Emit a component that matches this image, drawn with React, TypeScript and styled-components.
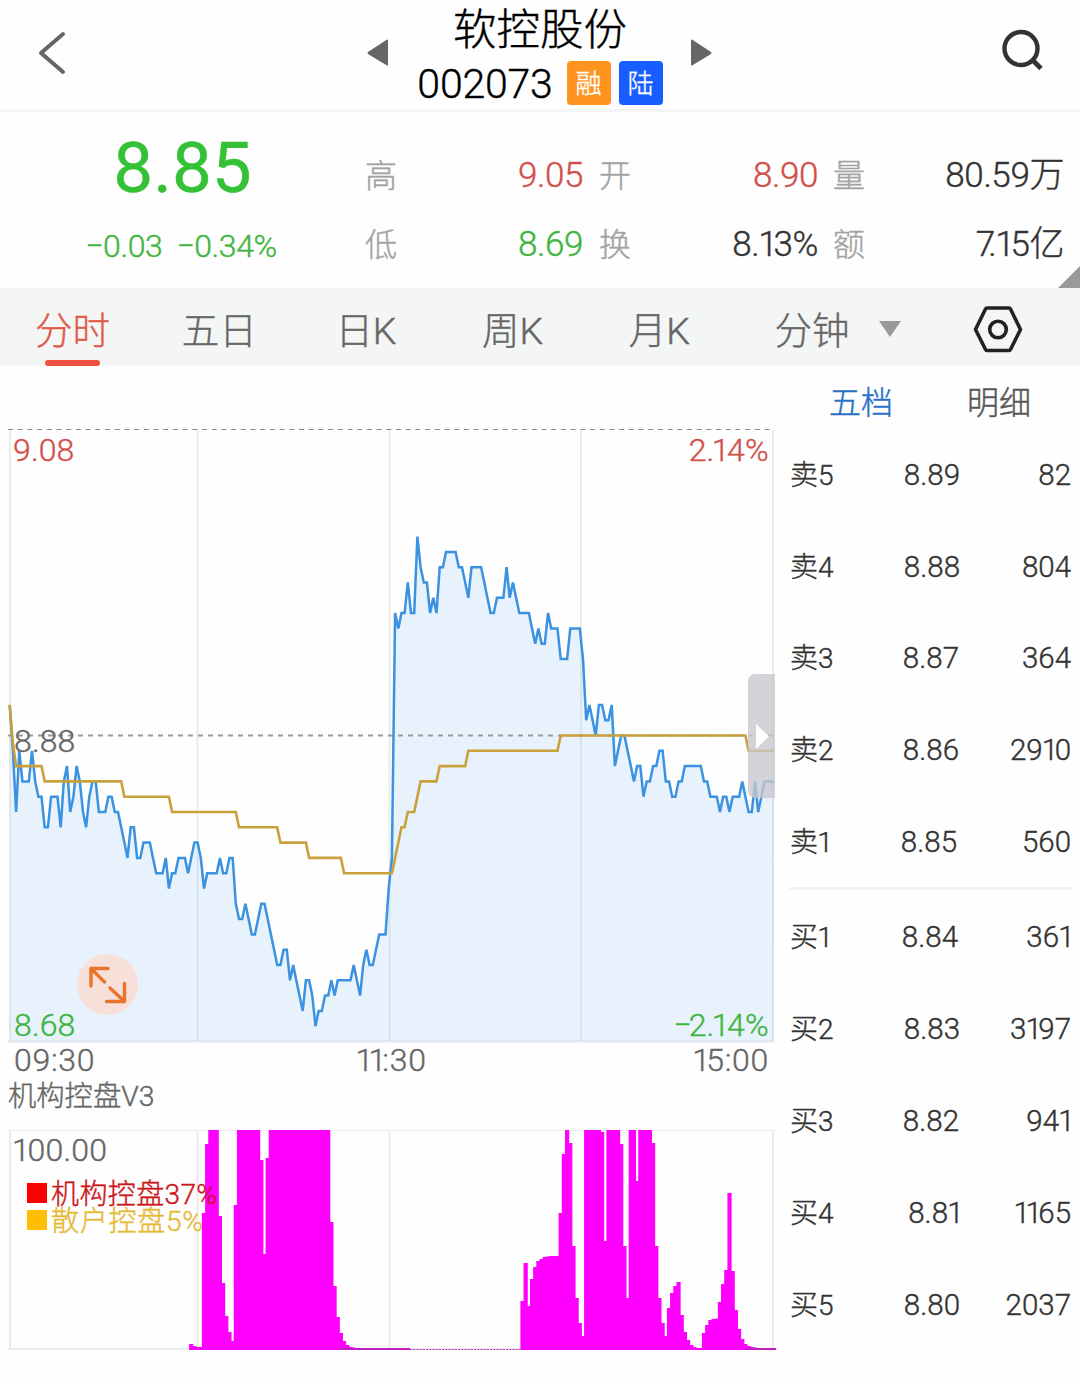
import React from 'react';
import styled, { createGlobalStyle } from 'styled-components';

const FONT = `Roboto, "Noto Sans CJK SC", sans-serif`;
const RED = '#d24f4a';
const GREEN = '#3fb53f';
const DARK = '#333';

const GlobalStyle = createGlobalStyle`
  * { box-sizing: border-box; }
  body {
    margin: 0;
    background: #fefefe;
    font-family: ${FONT};
    font-weight: 300;
    -webkit-text-stroke-width: 0.4px;
  }
`;

const Screen = styled.div`
  width: 1080px;
  height: 1380px;
  display: flex;
  flex-direction: column;
  overflow: hidden;
  background: #fefefe;
`;

/* ---------- header ---------- */

const Header = styled.header`
  height: 112px;
  flex: none;
  display: grid;
  grid-template-columns: 366px 348px 1fr;
  border-bottom: 3px solid #f3f5f6;
`;

const HeaderSide = styled.div<{ $end?: boolean }>`
  display: flex;
  align-items: flex-start;
  justify-content: ${p => (p.$end ? 'flex-end' : 'flex-start')};
  padding: ${p => (p.$end ? '28px 35px 0 0' : '30px 0 0 36px')};
`;

const TitleArea = styled.div`
  display: flex;
  justify-content: space-between;
  align-items: flex-start;
`;

const Arrow = styled.svg`
  display: block;
  flex: none;
  margin-top: 38px;
`;

const TitleText = styled.div`
  display: flex;
  flex-direction: column;
  align-items: center;
`;

const StockName = styled.div`
  height: 56px;
  font-size: 43.5px;
  line-height: 61px;
  color: #000;
`;

const CodeRow = styled.div`
  display: flex;
  align-items: center;
  height: 54px;
`;

const StockCode = styled.span`
  height: 54px;
  font-size: 41px;
  line-height: 56px;
  letter-spacing: -0.2px;
  color: #000;
`;

const Badge = styled.span<{ $color: string; $gap: number }>`
  width: 44px;
  height: 44px;
  margin-left: ${p => p.$gap}px;
  border-radius: 4px;
  background: ${p => p.$color};
  color: #fff;
  font-size: 26px;
  line-height: 47px;
  text-align: center;
`;

/* ---------- quote ---------- */

const Quote = styled.section`
  position: relative;
  height: 176px;
  flex: none;
  display: grid;
  grid-template-columns: 365px 1fr;
`;

const Current = styled.div`
  display: flex;
  flex-direction: column;
  align-items: center;
  padding-top: 21px;
  color: ${GREEN};
`;

const Price = styled.div`
  font-size: 71px;
  line-height: 70px;
  font-weight: 400;
  color: #35c135;
`;

const Changes = styled.div`
  display: flex;
  gap: 14px;
  margin: 23px 3px 0 0;
  font-size: 32px;
  line-height: 40px;
  letter-spacing: -0.4px;
`;

const Stats = styled.div`
  display: grid;
  grid-template-columns: 218px 16px 219px 15px 231px;
  grid-template-rows: 69px 69px;
  padding-top: 29px;
`;

const Stat = styled.div<{ $col: number }>`
  grid-column: ${p => p.$col};
  display: flex;
  align-items: center;
  justify-content: space-between;
`;

const StatLabel = styled.span`
  font-size: 32px;
  line-height: 40px;
  color: #a3a3a3;
`;

const StatValue = styled.span<{ $color: string }>`
  font-size: 35px;
  line-height: 40px;
  letter-spacing: -0.4px;
  color: ${p => p.$color};
`;

const Corner = styled.svg`
  position: absolute;
  right: 0;
  bottom: 0;
`;

/* figures with narrow sides, set close to their neighbours */
const Tight = styled.span<{ $seven?: boolean }>`
  margin-left: ${p => (p.$seven ? 0 : '-0.03em')};
  letter-spacing: ${p => (p.$seven ? '-0.2em' : '-0.12em')};
`;

const Digits = ({ children }: { children: string }) => (
  <>
    {children.split(/(1|7(?=\.))/).filter(Boolean).map((part, i) =>
      part === '1' || part === '7' ? <Tight key={i} $seven={part === '7'}>{part}</Tight> : part,
    )}
  </>
);

/* ---------- tabs ---------- */

const Tabs = styled.nav`
  height: 78px;
  flex: none;
  display: grid;
  grid-template-columns: repeat(5, 146.7px) 183.5px 163px;
  background: #f4f6f6;
`;

const Tab = styled.div<{ $active?: boolean }>`
  display: flex;
  flex-direction: column;
  align-items: center;
  font-size: 37.5px;
  line-height: 40px;
  color: ${p => (p.$active ? '#e05a4a' : '#666')};
  padding-right: 1.5px;
`;

const TabLabel = styled.span`
  margin-top: 23px;
  height: 49px;
  white-space: nowrap;
`;

const Underline = styled.span`
  width: 55px;
  height: 6px;
  border-radius: 3px;
  background: #f1503f;
`;

const MenuTab = styled.div`
  display: flex;
  align-items: flex-start;
  gap: 30px;
  padding-left: 41px;
  font-size: 37.5px;
  line-height: 40px;
  color: #666;
  svg { margin-top: 33px; }
`;

const Settings = styled.div`
  display: flex;
  padding: 17px 0 0 56px;
`;

/* ---------- body ---------- */

const Body = styled.main`
  flex: 1;
  display: grid;
  grid-template-columns: 780px 300px;
`;

const Charts = styled.div`
  position: relative;
  display: flex;
  flex-direction: column;
`;

const Plot = styled.svg`
  display: block;
  flex: none;
  text { stroke-width: 0.4px; }
`;

const TimeAxis = styled.div`
  height: 32px;
  display: grid;
  grid-template-columns: 1fr auto 1fr;
  padding: 0 11px 0 14px;
  font-size: 32px;
  line-height: 33px;
  letter-spacing: 0.7px;
  color: #666;
`;

const TimeLabel = styled.div`
  &:last-child { text-align: right; }
`;

const Caption = styled.div`
  height: 38px;
  padding-left: 8px;
  font-size: 28.3px;
  line-height: 41px;
  color: #666;
`;

const ExpandButton = styled.div`
  position: absolute;
  left: 77px;
  top: 588px;
  width: 61px;
  height: 61px;
  border-radius: 50%;
  background: rgba(253, 217, 206, 0.75);
`;

const DrawerHandle = styled.div`
  position: absolute;
  left: 748px;
  top: 308px;
  width: 27px;
  height: 124px;
  border-radius: 7px 0 0 7px;
  background: rgba(200, 199, 205, 0.78);
  svg { display: block; margin: 50px 0 0 8px; }
`;

const Book = styled.aside`
  display: flex;
  flex-direction: column;
  color: ${DARK};
`;

const BookTabs = styled.div`
  display: flex;
  height: 63px;
  padding: 17px 0 0 49px;
  gap: 74px;
  font-size: 32px;
  line-height: 40px;
`;

const BookTab = styled.span<{ $active?: boolean }>`
  color: ${p => (p.$active ? '#2870c8' : '#555')};
`;

const BookRow = styled.div`
  height: 91.8px;
  display: grid;
  grid-template-columns: 70px 100px 1fr;
  padding: 0 9px 0 10px;
  align-items: center;
  font-size: 29.5px;
  line-height: 40px;
`;

const Level = styled.span`
  padding-top: 2px;
  font-size: 28px;
`;

const Num = styled.span<{ $shift?: number }>`
  text-align: right;
  padding-right: ${p => p.$shift || 0}px;
`;

const BookDivider = styled.div`
  height: 3px;
  margin: -1px 8px 1.5px 9px;
  background: #f2f2f3;
`;

/* ---------- chart data: one value per trading minute ---------- */

// cents below the previous close (8.88)
const prices = [
  -2, 1, 5, 1, 3, 3, 3, 1, 3, 4, 4, 6, 6, 4, 4, 4, 6, 3, 2, 5, 4, 2, 3, 5, 6, 4, 3, 3, 5, 5,
  5, 4, 4, 5, 5, 6, 7, 8, 6, 6, 8, 8, 7, 7, 7, 8, 9, 9, 9, 8, 10, 9, 9, 8, 8, 8, 9, 8, 7, 7,
  8, 10, 9, 9, 9, 9, 8, 9, 9, 8, 8, 11, 12, 12, 11, 12, 13, 13, 12, 11, 11, 12, 13, 14, 15, 15, 14, 14, 16, 15,
  16, 17, 18, 16, 16, 17, 19, 18, 18, 17, 17, 16, 17, 16, 16, 16, 16, 16, 15, 16, 17, 15, 14, 15, 15, 14, 13, 13, 13, 10,
  8, -8, -7, -8, -8, -10, -8, -8, -13, -11, -10, -10, -8, -9, -8, -11, -11, -12, -12, -12, -12, -11, -11, -10, -9, -11, -11, -11, -11, -10,
  -9, -8, -8, -9, -9, -9, -11, -9, -10, -9, -8, -8, -8, -8, -7, -6, -7, -6, -6, -8, -7, -7, -7, -5, -5, -5, -7, -7, -7, -7,
  -5, -1, -2, -1, 0, -2, -2, -1, -1, -2, 2, 1, 0, 0, 1, 2, 3, 2, 2, 4, 3, 3, 2, 2, 1, 1, 3, 3, 4, 4,
  3, 3, 2, 2, 2, 2, 2, 2, 3, 3, 4, 4, 4, 5, 4, 4, 5, 4, 4, 4, 3, 4, 5, 5, 3, 5, 4, 3, 3, 3, 3,
];

const average: [number, number][] = [
  [0, -2], [1, 0.5], [2, 2], [10, 2], [11, 3], [35, 3], [36, 4], [50, 4], [51, 5], [71, 5], [72, 6],
  [84, 6], [85, 7], [93, 7], [94, 8], [104, 8], [105, 9], [120, 9], [123, 6], [124, 6], [125, 5],
  [127, 5], [129, 3], [134, 3], [135, 2], [143, 2], [144, 1], [172, 1], [173, 0], [231, 0], [232, 1], [240, 1],
];

// [first minute, bar heights...]
const F = 220;
const runs: number[][] = [
  [57, 6, 4, 3, 3, 137, 206, F, F, F, 134, 67, 34, 18, 9, 145, F, F, F, F, F, F, F, 190, 96, 192],
  [82, ...Array(19).fill(F), 128, 64, 33, 17, 9, 5, 3, 2.5, ...Array(17).fill(2)],
  [161, 49, 87, 44, 71, 83, 89, 91, 93, 93.5, 94, 94, 94, 137, 196, F, 207, 104, 52, 27, 14],
  [181, F, F, F, F, F, 218, 109, F, F, F, F, 206, 104, 52, F, F, 169, F, F, F, F, 207, 104, 52, 27, 14],
  [207, 42, 57, 64, 68, 35, 18, 10, 5, 3, 2, 2, 17, 25, 30, 31, 31.5, 48, 66, 80, 157, 79, 40, 21, 11, 6, 4, 3, 2.5, 2, 2, 2, 2, 2, 2],
];

const px = (i: number) => 9.7 + 3.185 * i;
const py = (k: number) => 369.5 + 15.3 * k;
const pricePoints = prices.map((k, i) => `${px(i).toFixed(1)},${py(k).toFixed(1)}`).join(' ');
const averagePoints = average.map(([i, k]) => `${px(i).toFixed(1)},${py(k).toFixed(1)}`).join(' ');

type LabelProps = { x: number; y: number; fill: string; text: string; end?: boolean };

const AxisLabel = ({ x, y, fill, text, end }: LabelProps) => {
  const dx = [...text]
    .map((c, i) => {
      const previous = text[i - 1];
      return (i && c === '1' ? -2.5 : 0.1) + (previous === '1' ? -2.5 : 0) + (previous === '−' ? -3 : 0);
    })
    .join(' ');
  return (
    <text x={x} y={y} dx={dx} fill={fill} stroke={fill} textAnchor={end ? 'end' : 'start'}>{text}</text>
  );
};

const PriceChart = () => (
  <Plot width="780" height="678" fontFamily={FONT} fontSize="32" fill="none">
    <g stroke="#ececec" strokeWidth="2">
      <path d="M10 64V675M197.5 64V675M389.5 64V675M581 64V675M773 64V675" />
      <path d="M8 675.5H774" stroke="#e3e6ec" />
    </g>
    <path d="M8 63.5H774" stroke="#8a8a8a" strokeWidth="1" strokeDasharray="5 4.7" />
    <polygon points={`9.7,675 ${pricePoints} 774,675`} fill="rgba(50,140,250,0.105)" />
    <path d="M8 369.5H774" stroke="#9b9b9b" strokeWidth="1.9" strokeDasharray="5 5" />
    <polyline points={pricePoints} stroke="#3a92e0" strokeWidth="2.5" />
    <AxisLabel x={14} y={385.5} fill="#666" text="8.88" />
    <polyline points={averagePoints} stroke="#c9a13c" strokeWidth="2.6" />
    <AxisLabel x={13} y={94.5} fill={RED} text="9.08" />
    <AxisLabel x={768.5} y={94.5} fill={RED} text="2.14%" end />
    <AxisLabel x={14} y={670} fill={GREEN} text="8.68" />
    <AxisLabel x={768.5} y={670} fill={GREEN} text="−2.14%" end />
  </Plot>
);

const ControlChart = () => (
  <Plot width="780" height="240" fontFamily={FONT} fill="none">
    <g stroke="#ececec" strokeWidth="2">
      <path d="M8 16.5H775" strokeWidth="1" />
      <path d="M10 16V235M197.5 16V235M389.5 16V235M773 16V235M8 235H775" />
    </g>
    <path d="M410 235.5H520" stroke="#b02bb0" strokeWidth="1" strokeDasharray="2 1.2" />
    <g fill="#ff00ff">
      {runs.flatMap(([start, ...values]) =>
        values.map((v, n) => (
          <rect key={start + n} x={px(start + n) - 2.1} y={236 - v} width="4.2" height={v} />
        )),
      )}
    </g>
    <path d="M340 235H410M745 235H775" stroke="#c01fc0" strokeWidth="2" />
    <g fontSize="32" letterSpacing="0.1"><AxisLabel x={12} y={46.5} fill="#666" text="100.00" /></g>
    <rect x="27" y="69" width="20" height="20" fill="#f00" />
    <rect x="27" y="96" width="20" height="20" fill="#ffbf00" />
    <text x="51" y="90" fontSize="28" fill="#cc1518" stroke="#cc1518" textLength="166">机构控盘37%</text>
    <text x="51" y="117" fontSize="28" fill="#e6b932" stroke="#e6b932" textLength="152">散户控盘5%</text>
  </Plot>
);

const tabs = ['分时', '五日', '日K', '周K', '月K'];

const stats = [
  { col: 1, label: '高', value: '9.05', color: RED },
  { col: 3, label: '开', value: '8.90', color: RED },
  { col: 5, label: '量', value: '80.59万', color: DARK },
  { col: 1, label: '低', value: '8.69', color: GREEN },
  { col: 3, label: '换', value: '8.13%', color: DARK },
  { col: 5, label: '额', value: '7.15亿', color: DARK },
];

type Order = [string, string, string, number];
const sells: Order[] = [
  ['卖5', '8.89', '82', 0], ['卖4', '8.88', '804', 0], ['卖3', '8.87', '364', 1],
  ['卖2', '8.86', '2910', 1], ['卖1', '8.85', '560', 3],
];
const buys: Order[] = [
  ['买1', '8.84', '361', 2], ['买2', '8.83', '3197', 0], ['买3', '8.82', '941', 1],
  ['买4', '8.81', '1165', 0], ['买5', '8.80', '2037', 0],
];

const Orders = ({ rows }: { rows: Order[] }) => (
  <>
    {rows.map(([level, price, volume, shift]) => (
      <BookRow key={level}>
        <Level><Digits>{level}</Digits></Level>
        <Num $shift={shift}><Digits>{price}</Digits></Num>
        <Num><Digits>{volume}</Digits></Num>
      </BookRow>
    ))}
  </>
);

export default function App() {
  return (
    <Screen>
      <GlobalStyle />
      <Header>
        <HeaderSide>
          <svg width="32" height="46" fill="none" stroke="#666" strokeWidth="4" strokeLinecap="round" strokeLinejoin="round">
            <path d="M27 4L5 23L27 42" />
          </svg>
        </HeaderSide>
        <TitleArea>
          <Arrow width="23" height="30"><path d="M22 3V27Q22 28 21 27.5L2 16Q1 15 2 14L21 1.5Q22 1 22 3Z" fill="#666" /></Arrow>
          <TitleText>
            <StockName>软控股份</StockName>
            <CodeRow>
              <StockCode>002073</StockCode>
              <Badge $color="#ff941f" $gap={14}>融</Badge>
              <Badge $color="#185dff" $gap={8}>陆</Badge>
            </CodeRow>
          </TitleText>
          <Arrow width="23" height="30"><path d="M0 3V27Q0 28 1 27.5L20 16Q21 15 20 14L1 1.5Q0 1 0 3Z" fill="#666" /></Arrow>
        </TitleArea>
        <HeaderSide $end>
          <svg width="44" height="44" fill="none" stroke="#333" strokeWidth="4.4">
            <circle cx="20" cy="20.5" r="16.5" />
            <path d="M30.5 31L40 40.5" strokeWidth="4.8" />
          </svg>
        </HeaderSide>
      </Header>

      <Quote>
        <Current>
          <Price>8.85</Price>
          <Changes><span>−0.03</span><span>−0.34%</span></Changes>
        </Current>
        <Stats>
          {stats.map(s => (
            <Stat key={s.label} $col={s.col}>
              <StatLabel>{s.label}</StatLabel>
              <StatValue $color={s.color}><Digits>{s.value}</Digits></StatValue>
            </Stat>
          ))}
        </Stats>
        <Corner width="22" height="22"><path d="M22 0V22H0Z" fill="#999" /></Corner>
      </Quote>

      <Tabs>
        {tabs.map((t, i) => (
          <Tab key={t} $active={i === 0}>
            <TabLabel>{t}</TabLabel>
            {i === 0 && <Underline />}
          </Tab>
        ))}
        <MenuTab>
          <TabLabel>分钟</TabLabel>
          <svg width="22" height="16"><path d="M0 0H22L11 16Z" fill="#999" /></svg>
        </MenuTab>
        <Settings>
          <svg width="50" height="50" fill="none" stroke="#222" strokeWidth="3.6" strokeLinejoin="round">
            <path d="M14 3H36Q37 3 37.5 4L47.5 24.5L37.5 44.5Q37 45.5 36 45.5H14Q13 45.5 12.5 44.5L2.5 24.5L12.5 4Q13 3 14 3Z" />
            <circle cx="25" cy="24.5" r="8.3" />
          </svg>
        </Settings>
      </Tabs>

      <Body>
        <Charts>
          <PriceChart />
          <TimeAxis>
            {['09:30', '11:30', '15:00'].map(t => (
              <TimeLabel key={t}><Digits>{t}</Digits></TimeLabel>
            ))}
          </TimeAxis>
          <Caption>机构控盘V3</Caption>
          <ControlChart />
          <ExpandButton>
            <svg width="61" height="61" fill="none" stroke="#e8742c" strokeWidth="3.4" strokeLinecap="round" strokeLinejoin="round">
              <path d="M31 14.5H14V32M14 14.5L27.5 28M33 34L47.5 47.5M47.5 29.5V47.5H29.5" />
            </svg>
          </ExpandButton>
          <DrawerHandle>
            <svg width="13" height="25"><path d="M0 0L13 12.5L0 25Z" fill="#fff" /></svg>
          </DrawerHandle>
        </Charts>
        <Book>
          <BookTabs>
            <BookTab $active>五档</BookTab>
            <BookTab>明细</BookTab>
          </BookTabs>
          <Orders rows={sells} />
          <BookDivider />
          <Orders rows={buys} />
        </Book>
      </Body>
    </Screen>
  );
}
